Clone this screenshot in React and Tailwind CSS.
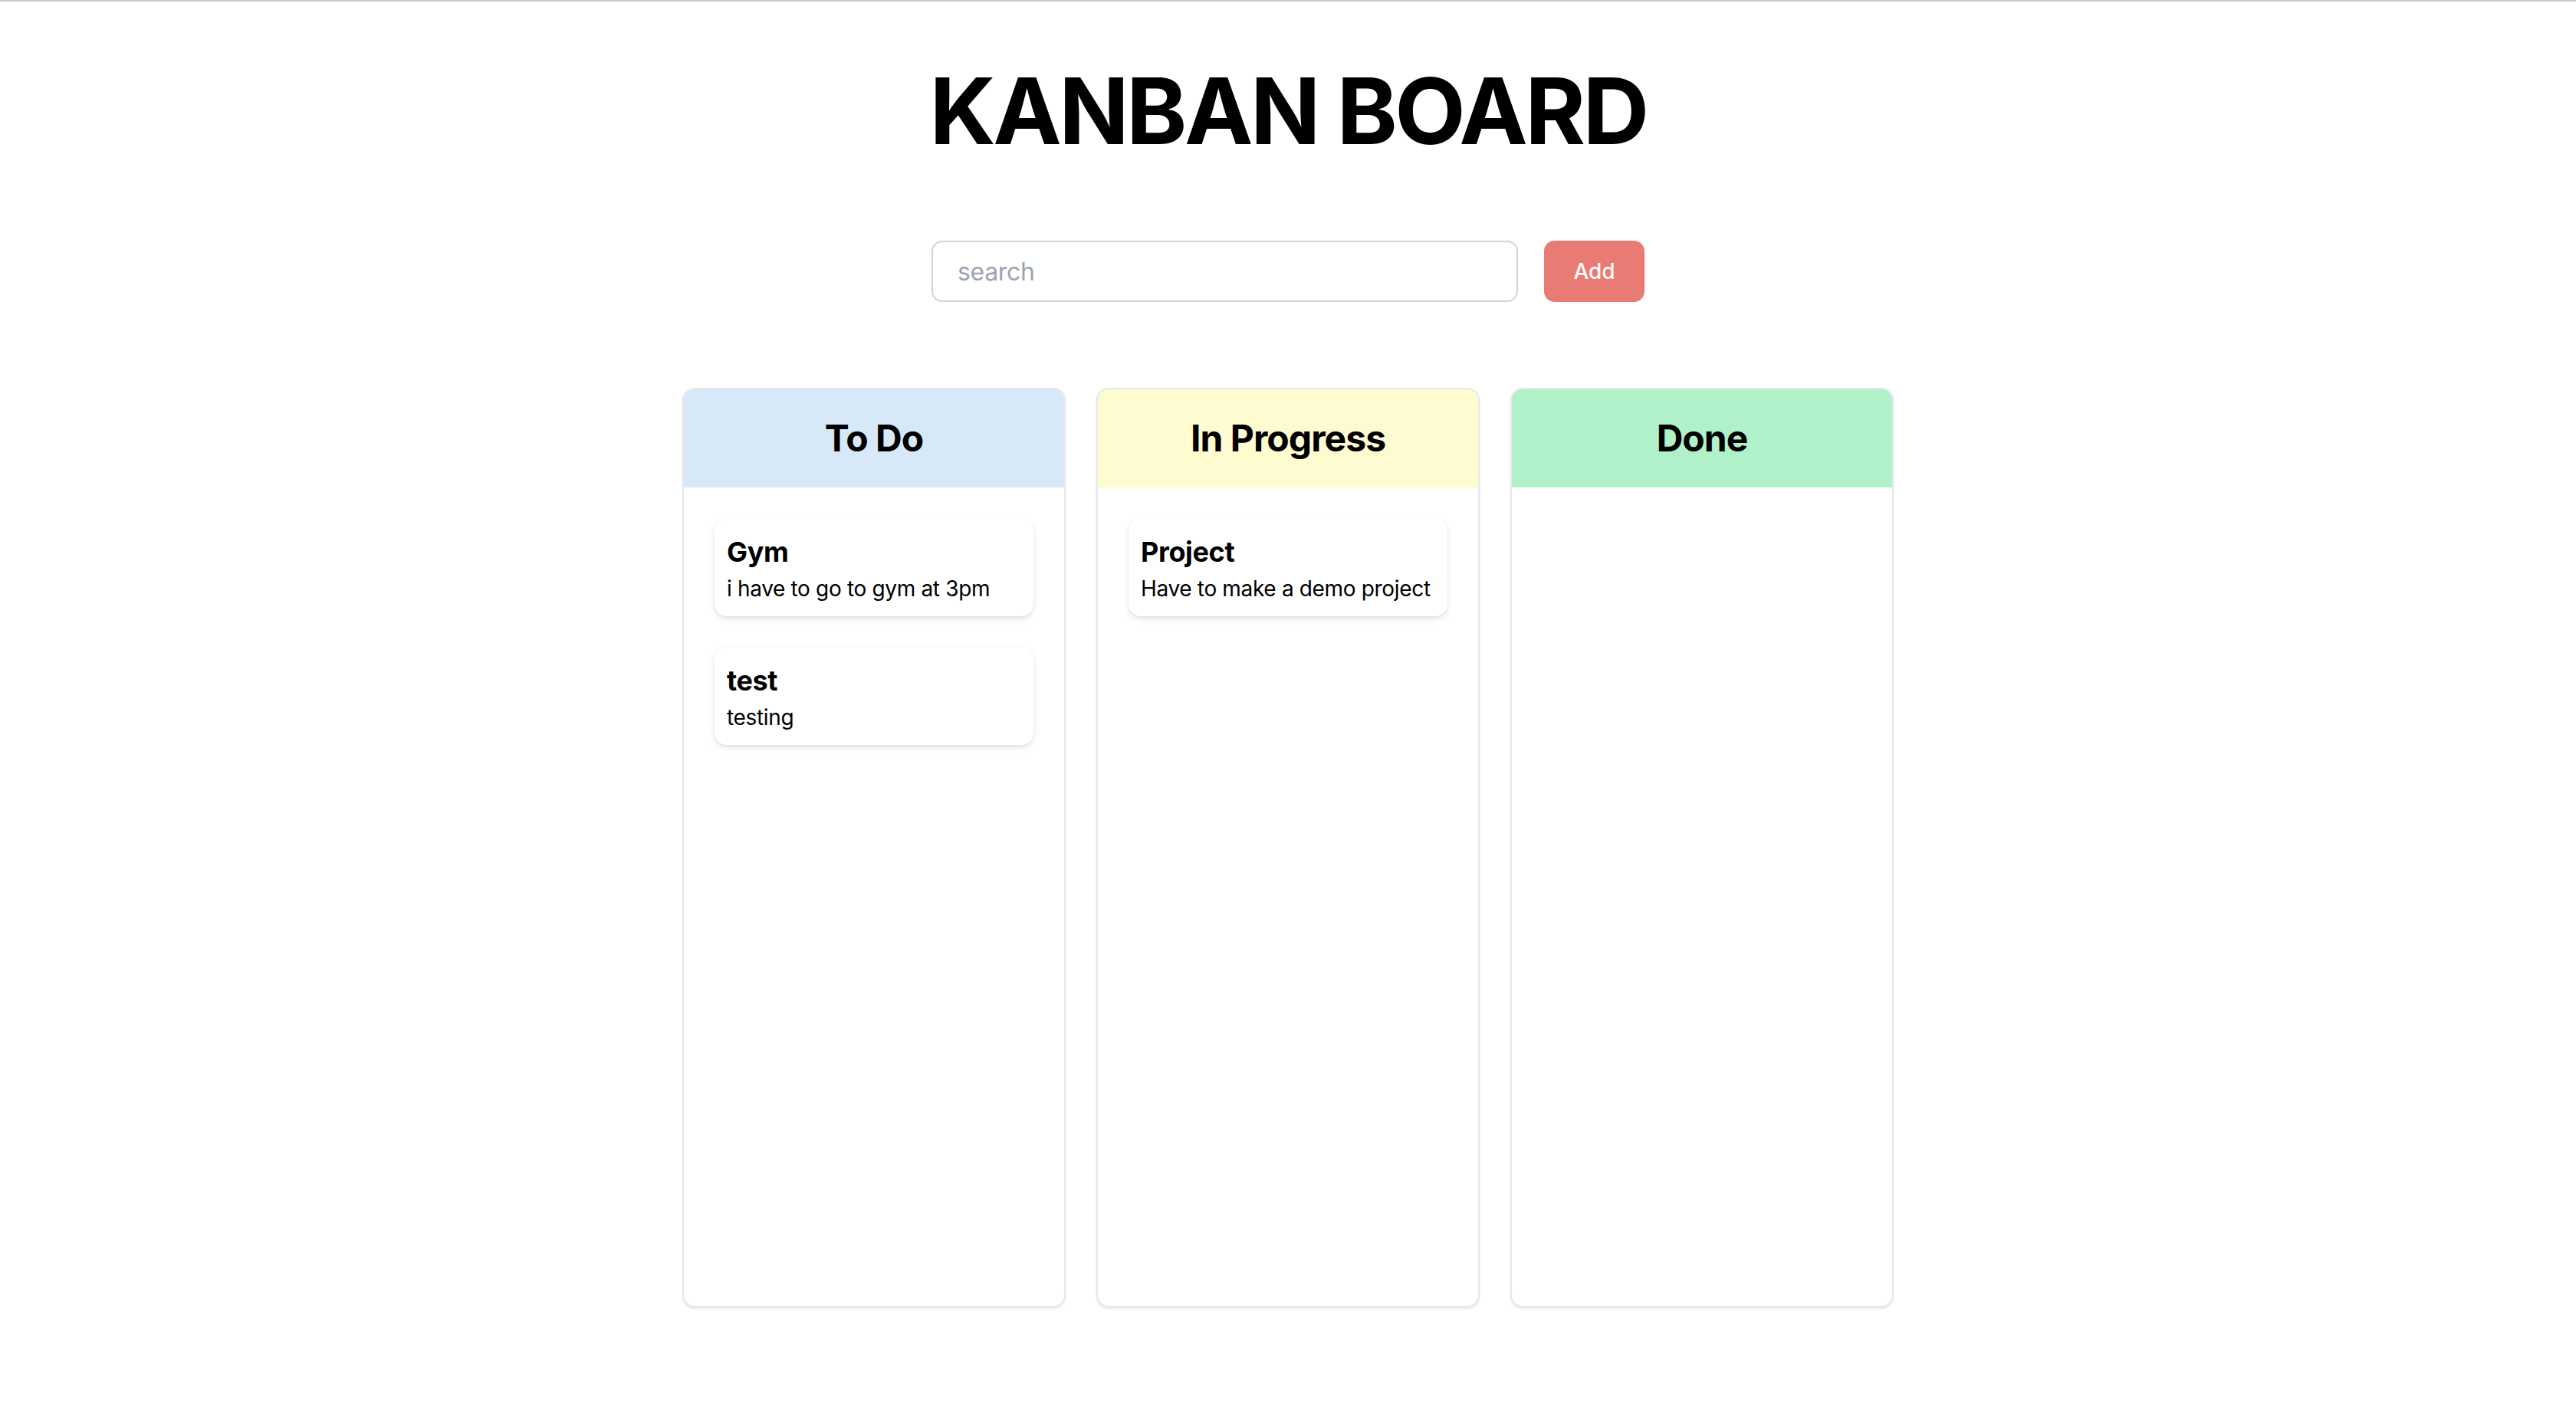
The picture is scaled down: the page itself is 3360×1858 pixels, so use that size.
import React, { useState } from 'react';

const columns = [
  {
    id: 'todo',
    title: 'To Do',
    headerClass: 'bg-[#d7e9f8]',
    tasks: [
      { id: 1, title: 'Gym', description: 'i have to go to gym at 3pm' },
      { id: 2, title: 'test', description: 'testing' },
    ],
  },
  {
    id: 'progress',
    title: 'In Progress',
    headerClass: 'bg-[#fffbd1]',
    tasks: [{ id: 3, title: 'Project', description: 'Have to make a demo project' }],
  },
  {
    id: 'done',
    title: 'Done',
    headerClass: 'bg-[#b1f1c9]',
    tasks: [],
  },
];

const TaskCard = ({ task }) => (
  <div className="bg-white rounded-[16px] p-[16px] shadow-[0_4px_10px_rgba(0,0,0,0.08),0_2px_4px_rgba(0,0,0,0.06)]">
    <h3 className="text-[36px] leading-[56px] font-bold tracking-[-0.01em] text-black">{task.title}</h3>
    <p className="text-[28px] leading-[40px] tracking-[-0.012em] whitespace-nowrap text-black">{task.description}</p>
  </div>
);

const Column = ({ column }) => (
  <div className="w-[500px] h-[1200px] border-2 border-[#e5e7eb] rounded-[16px] overflow-hidden bg-white shadow-[0_2px_3px_rgba(0,0,0,0.08)] flex flex-col">
    <div className={`${column.headerClass} py-[32px] text-center`}>
      <h2 className="text-[48px] leading-[64px] font-bold tracking-[-0.02em] text-black">{column.title}</h2>
    </div>
    <div className="p-[40px] flex flex-col gap-[40px]">
      {column.tasks.map(task => <TaskCard key={task.id} task={task} />)}
    </div>
  </div>
);

const App = () => {
  const [search, setSearch] = useState('');

  return (
    <div className="min-h-screen bg-white border-t-2 border-[#c9c9c9] font-['Inter','Noto_Sans',sans-serif] text-black">
      <div className="flex flex-col items-center pt-[83px]">
        <h1 className="text-[120px] leading-[120px] font-bold tracking-[-0.03em]">KANBAN BOARD</h1>

        <div className="mt-[109px] flex items-center gap-[34px]">
          <input
            type="text"
            placeholder="search"
            value={search}
            onChange={(e) => setSearch(e.target.value)}
            className="w-[765px] h-[80px] px-[32px] border-2 border-[#d1d5db] rounded-[14px] text-[32px] tracking-[-0.01em] text-black placeholder:text-[#9ca3af] outline-none"
          />
          <button className="w-[131px] h-[80px] rounded-[14px] bg-[#e97a74] text-white text-[28px] font-medium">
            Add
          </button>
        </div>

        <div className="mt-[112px] flex gap-[40px] pb-[150px]">
          {columns.map(col => <Column key={col.id} column={col} />)}
        </div>
      </div>
    </div>
  );
};

export default App;
